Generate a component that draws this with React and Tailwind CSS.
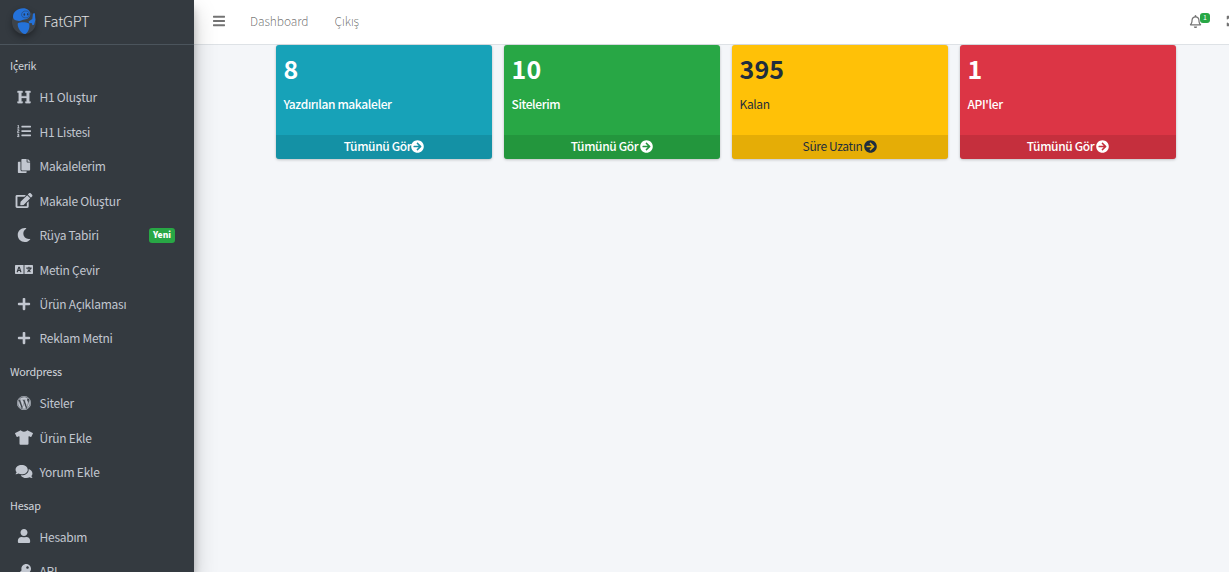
import React from "react";
import {
  FaArrowCircleRight,
  FaBars,
  FaComments,
  FaCopy,
  FaEdit,
  FaExpandArrowsAlt,
  FaHeading,
  FaKey,
  FaLanguage,
  FaListOl,
  FaMoon,
  FaPlus,
  FaRegBell,
  FaTshirt,
  FaUser,
  FaWordpress,
} from "react-icons/fa";

const menu = [
  {
    title: "İçerik",
    items: [
      { label: "H1 Oluştur", icon: FaHeading, stroke: 12 },
      { label: "H1 Listesi", icon: FaListOl },
      { label: "Makalelerim", icon: FaCopy },
      { label: "Makale Oluştur", icon: FaEdit, wide: true },
      { label: "Rüya Tabiri", icon: FaMoon, badge: "Yeni" },
      { label: "Metin Çevir", icon: FaLanguage, wide: true },
      { label: "Ürün Açıklaması", icon: FaPlus },
      { label: "Reklam Metni", icon: FaPlus },
    ],
  },
  {
    title: "Wordpress",
    items: [
      { label: "Siteler", icon: FaWordpress, stroke: 12 },
      { label: "Ürün Ekle", icon: FaTshirt, wide: true },
      { label: "Yorum Ekle", icon: FaComments, wide: true },
    ],
  },
  {
    title: "Hesap",
    items: [
      { label: "Hesabım", icon: FaUser },
      { label: "API", icon: FaKey },
    ],
  },
];

const cards = [
  { value: "8", label: "Yazdırılan makaleler", link: "Tümünü Gör", color: "bg-[#17a2b8] text-white font-medium", tight: true },
  { value: "10", label: "Sitelerim", link: "Tümünü Gör", color: "bg-[#28a745] text-white font-medium" },
  { value: "395", label: "Kalan", link: "Süre Uzatın", color: "bg-[#ffc107] text-[#1f2d3d]" },
  { value: "1", label: "API'ler", link: "Tümünü Gör", color: "bg-[#dc3545] text-white font-medium" },
];

const Logo = () => (
  <svg viewBox="0 0 26 28" className="h-7 w-[26px] shrink-0 drop-shadow-[0_3px_3px_rgba(0,0,0,0.35)]">
    <circle cx="13" cy="15" r="12" fill="#3d434a" />
    <g fill="#2472da">
      <path d="M2 9.500C2 5 6.500 1.200 12 1.200c4.500 0 7.300 2.600 7.300 5.800 0 3.200-2.500 5-5.800 5.500-2 .3-3.500 1.700-5.500 1.500C4.500 13.700 2 12.500 2 9.500z" />
      <path d="M6.800 16.300c2.700-1.300 8.200-1.300 11.400.2 1 3.400-.8 9.400-3.800 10.500-3.400.5-8.600-6.200-7.600-10.700z" />
      <path d="M17.500 14.500l3.800-2.500.7-5.500 1.900-.3.500 6.500-1.300 5-1.600.6-.9-2.200-2.400.1z" />
    </g>
    <path d="M10.600 8.300C10.300 5.500 12.300 3.800 15 4c2.600.2 3.700 1.800 3.300 4-.3 1.900-1.500 2.800-3.500 2.800-2.100 0-4-.9-4.200-2.500z" fill="none" stroke="#28466f" strokeWidth=".6" />
    <ellipse cx="13.300" cy="7.500" rx=".8" ry="1.300" fill="#263a59" />
    <ellipse cx="16.700" cy="7.300" rx=".7" ry="1.200" fill="#263a59" />
  </svg>
);

const MenuItem = ({ item }) => {
  const Icon = item.icon;
  return (
    <li className="mb-[2.450px] flex h-8 items-center pl-[14px] text-[#c2c7d0]">
      <span className="flex w-5 justify-center pb-px">
        <Icon
          className={item.wide ? "h-[15px] w-[18px]" : "size-[14px]"}
          strokeWidth={item.stroke || 0}
        />
      </span>
      <span className="ml-[5.500px] text-[12px] tracking-[-0.250px]">{item.label}</span>
      {item.badge && (
        <span className="mr-[19px] ml-auto flex h-[15px] w-[26px] items-center justify-center rounded-[3px] bg-[#28a745] pb-px text-[8.500px] font-black text-white">
          {item.badge}
        </span>
      )}
    </li>
  );
};

const Sidebar = () => (
  <aside className="z-10 h-full w-[194px] shrink-0 overflow-hidden bg-[#343a40] shadow-[0_11px_22px_rgba(0,0,0,0.22),0_8px_8px_rgba(0,0,0,0.2)]">
    <div className="flex h-[45px] items-center border-b border-[#4b545c] pb-[3px] pl-[11px]">
      <Logo />
      <span className="ml-[6.500px] pt-px text-[14.500px] font-light tracking-[-0.150px] text-white/85">FatGPT</span>
    </div>
    <nav className="pt-[5.400px]">
      {menu.map((group) => (
        <div key={group.title}>
          <h2 className="flex h-[30px] items-center pl-[10px] text-[10.800px] tracking-[-0.200px] text-[#d0d4db] first:mb-px">
            {group.title}
          </h2>
          <ul className="-mb-[0.800px]">
            {group.items.map((item) => (
              <MenuItem key={item.label} item={item} />
            ))}
          </ul>
        </div>
      ))}
    </nav>
  </aside>
);

const Navbar = () => (
  <header className="flex h-[45px] shrink-0 items-center overflow-hidden border-b border-[#dee2e6] bg-white pb-[2px] pl-[19px] text-[12px] font-light text-black/55">
    <FaBars className="h-[14px] w-3" />
    <a className="ml-[25px] tracking-[-0.080px]">Dashboard</a>
    <a className="ml-[26px] tracking-[-0.080px]">Çıkış</a>
    <div className="ml-auto flex items-center">
      <div className="relative">
        <FaRegBell className="size-[13px]" />
        <span className="absolute -top-[2px] left-[11px] flex h-[10px] w-[10px] items-center justify-center rounded-[3px] bg-[#28a745] text-[7px] font-normal text-white">
          1
        </span>
      </div>
      <FaExpandArrowsAlt className="-mr-[9px] ml-[24px] size-3 shrink-0" />
    </div>
  </header>
);

const StatCard = ({ card }) => (
  <div className={`flex h-[114px] flex-col overflow-hidden rounded-[3px] shadow-[0_0_1px_rgba(0,0,0,0.13),0_1px_3px_rgba(0,0,0,0.2)] ${card.color}`}>
    <div className="flex-1 px-[7.500px] pt-[6px]">
      <h3 className="text-[25px] leading-[34px] font-bold tracking-[0.150px]">{card.value}</h3>
      <p className="mt-[10px] text-[12px] leading-[18px] tracking-[-0.370px]">{card.label}</p>
    </div>
    <a className="flex h-6 items-center justify-center bg-black/10 pb-[2px] text-[12px]">
      <span className="tracking-[-0.370px]">{card.link}</span>
      <FaArrowCircleRight className={card.tight ? "size-[13px]" : "ml-[2px] size-[13px]"} />
    </a>
  </div>
);

const App = () => {
  return (
    <div className="flex h-[572px] w-full overflow-hidden bg-[#f4f6f9] font-['Noto_Sans_CJK_JP','Noto_Sans',sans-serif]">
      <Sidebar />
      <div className="flex min-w-0 flex-1 flex-col">
        <Navbar />
        <main className="grid grid-cols-[repeat(4,216px)] gap-3 pl-[82px]">
          {cards.map((card) => (
            <StatCard key={card.label} card={card} />
          ))}
        </main>
      </div>
    </div>
  );
};

export default App;
